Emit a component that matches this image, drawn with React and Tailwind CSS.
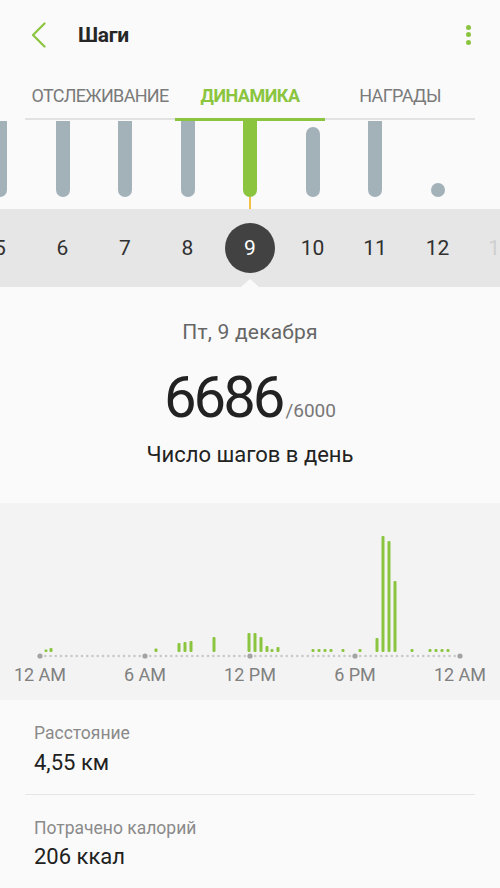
import React from "react";

const GREEN = "#8bc53f";

const weekCols = [
  { n: "5", bar: "tall" },
  { n: "6", bar: "tall" },
  { n: "7", bar: "tall" },
  { n: "8", bar: "tall" },
  { n: "9", bar: "green" },
  { n: "10", bar: "mid" },
  { n: "11", bar: "tall" },
  { n: "12", bar: "dot" },
  { n: "13", bar: "none" },
];

// [x, top] absolute page coords; bottom at 652
const bars = [
  [46, 649.5], [51, 648], [156, 648.5], [179, 643], [185, 642], [191, 641],
  [214, 637], [249, 633], [255, 633], [261, 637], [267, 646], [272, 649],
  [278, 647], [313, 649], [319, 649], [325, 649], [331, 649], [343, 649],
  [360, 649], [377, 638], [383, 536], [389, 541], [395, 581], [412, 649],
  [430, 649], [436, 649], [442, 649], [448, 649],
];

function Chart() {
  const top = 503;
  const minor = [];
  for (let i = 0; i <= 80; i++) {
    const x = 40 + i * 5.25;
    const major = i % 20 === 0;
    minor.push(
      <circle
        key={i}
        cx={x}
        cy={656 - top}
        r={major ? 2.6 : 1.3}
        fill={major ? "#a3a3a3" : "#c9c9c9"}
      />
    );
  }
  return (
    <svg width="500" height="160" viewBox="0 0 500 160" className="block">
      {bars.map(([x, t], i) => (
        <rect
          key={i}
          x={x - 1.5}
          y={t - top}
          width="3"
          height={652 - t}
          rx="1"
          fill={GREEN}
        />
      ))}
      {minor}
    </svg>
  );
}

export default function App() {
  return (
    <div
      className="w-[500px] h-[888px] overflow-hidden bg-[#fafafa] text-[#212121]"
      style={{ fontFamily: "Roboto, 'Noto Sans', sans-serif" }}
    >
      {/* Header */}
      <div className="h-[69px] flex items-center pl-[31px] pr-[29px]">
        <svg width="15" height="26" viewBox="0 0 15 26" className="shrink-0">
          <polyline
            points="13.5,1.5 2,13 13.5,24.5"
            fill="none"
            stroke={GREEN}
            strokeWidth="2.2"
            strokeLinecap="round"
            strokeLinejoin="round"
          />
        </svg>
        <div className="ml-[32px] text-[21px] font-bold leading-[28px] tracking-[-0.3px] text-[#262626] pt-[1px]">
          Шаги
        </div>
        <div className="ml-auto flex flex-col items-center gap-[2.5px]">
          <div className="w-[5px] h-[5px] rounded-full bg-[#8bc53f]" />
          <div className="w-[5px] h-[5px] rounded-full bg-[#8bc53f]" />
          <div className="w-[5px] h-[5px] rounded-full bg-[#8bc53f]" />
        </div>
      </div>

      {/* Tabs */}
      <div className="mx-[25px] h-[52px] flex">
        <div className="flex-1 flex flex-col">
          <div className="flex-1 flex items-center justify-center pt-[4px] text-[18px] leading-[24px] tracking-[-0.7px] text-[#7a7a7a]">
            ОТСЛЕЖИВАНИЕ
          </div>
          <div className="h-[2px] mb-[1px] bg-[#e2e2e2]" />
        </div>
        <div className="flex-1 flex flex-col">
          <div className="flex-1 flex items-center justify-center pt-[4px] text-[18px] leading-[24px] tracking-[-0.5px] font-bold text-[#8bc53f]">
            ДИНАМИКА
          </div>
          <div className="h-[3px] bg-[#8bc53f]" />
        </div>
        <div className="flex-1 flex flex-col">
          <div className="flex-1 flex items-center justify-center pt-[4px] text-[18px] leading-[24px] tracking-[-0.6px] text-[#7a7a7a]">
            НАГРАДЫ
          </div>
          <div className="h-[2px] mb-[1px] bg-[#e2e2e2]" />
        </div>
      </div>

      {/* Week bars */}
      <div className="h-[88px] flex justify-center overflow-hidden">
        {weekCols.map((c) => (
          <div
            key={c.n}
            className="w-[62.5px] shrink-0 flex flex-col items-center justify-end"
          >
            {c.bar === "tall" && (
              <div className="w-[14px] h-[76px] rounded-b-full bg-[#a3b1b9] mb-[12px]" />
            )}
            {c.bar === "mid" && (
              <div className="w-[14px] h-[70px] rounded-full bg-[#a3b1b9] mb-[12px]" />
            )}
            {c.bar === "dot" && (
              <div className="w-[14px] h-[14px] rounded-full bg-[#a3b1b9] mb-[12px]" />
            )}
            {c.bar === "green" && (
              <>
                <div className="w-[14px] h-[76px] rounded-b-full bg-[#8bc53f]" />
                <div className="w-[2px] h-[12px] bg-[#f4c04a]" />
              </>
            )}
          </div>
        ))}
      </div>

      {/* Date strip */}
      <div className="relative h-[78px] bg-[#e6e6e6] flex justify-center items-center overflow-hidden">
        {weekCols.map((c) => (
          <div
            key={c.n}
            className="w-[62.5px] shrink-0 flex items-center justify-center"
          >
            {c.n === "9" ? (
              <div className="w-[50px] h-[50px] rounded-full bg-[#424242] flex items-center justify-center text-white text-[21px] leading-[26px]">
                9
              </div>
            ) : (
              <div
                className={
                  "text-[21px] leading-[26px] " +
                  (c.n === "13" ? "text-[#cfcfcf]" : "text-[#303030]")
                }
              >
                {c.n}
              </div>
            )}
          </div>
        ))}
        <div className="absolute bottom-0 left-[241px] w-0 h-0 border-l-[9px] border-r-[9px] border-b-[8px] border-l-transparent border-r-transparent border-b-[#fafafa]" />
      </div>

      {/* Summary */}
      <div className="h-[216px] flex flex-col items-center pt-[30px]">
        <div className="text-[21px] leading-[30px] tracking-[0.2px] text-[#666666]">
          Пт, 9 декабря
        </div>
        <div className="mt-[18px] h-[64px] flex items-baseline justify-center">
          <span className="text-[58px] leading-[64px] tracking-[-3px] text-[#222222]">
            6686
          </span>
          <span className="ml-[3px] text-[19px] leading-[19px] text-[#777777]">
            /6000
          </span>
        </div>
        <div className="mt-[11px] text-[22px] leading-[30px] text-[#222222]">
          Число шагов в день
        </div>
      </div>

      {/* Chart */}
      <div className="h-[197px] bg-[#f3f3f3]">
        <Chart />
        <div className="ml-[-12.5px] w-[525px] grid grid-cols-5 text-[18px] leading-[23px] text-[#808080]">
          <div className="text-center">12 AM</div>
          <div className="text-center">6 AM</div>
          <div className="text-center">12 PM</div>
          <div className="text-center">6 PM</div>
          <div className="text-center">12 AM</div>
        </div>
      </div>

      {/* List */}
      <div className="px-[25px]">
        <div className="pl-[9px] pt-[21px] pb-[17px] border-b border-[#e6e6e6]">
          <div className="text-[17.5px] leading-[24px] text-[#8a8a8a]">Расстояние</div>
          <div className="mt-[4px] text-[22px] leading-[28px] text-[#212121]">4,55 км</div>
        </div>
        <div className="pl-[9px] pt-[21px] pb-[17px] border-b border-[#e6e6e6]">
          <div className="text-[17.5px] leading-[24px] text-[#8a8a8a]">Потрачено калорий</div>
          <div className="mt-[3px] text-[22px] leading-[28px] text-[#212121]">206 ккал</div>
        </div>
      </div>
    </div>
  );
}
